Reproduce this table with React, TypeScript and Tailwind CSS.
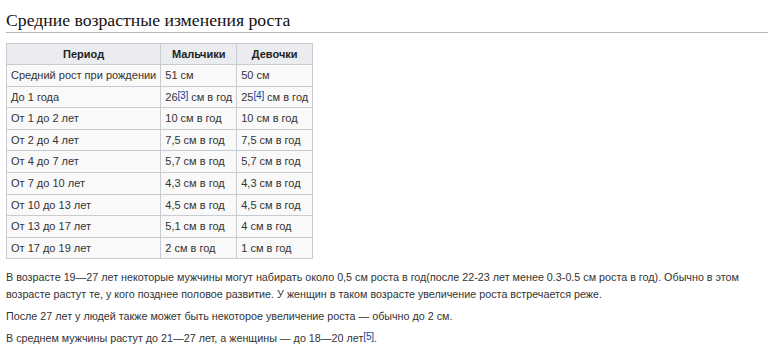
const rows: [string, React.ReactNode, React.ReactNode][] = [
  ["Средний рост при рождении", "51 см", "50 см"],
  [
    "До 1 года",
    <>
      26<Ref n={3} /> см в год
    </>,
    <>
      25<Ref n={4} /> см в год
    </>,
  ],
  ["От 1 до 2 лет", "10 см в год", "10 см в год"],
  ["От 2 до 4 лет", "7,5 см в год", "7,5 см в год"],
  ["От 4 до 7 лет", "5,7 см в год", "5,7 см в год"],
  ["От 7 до 10 лет", "4,3 см в год", "4,3 см в год"],
  ["От 10 до 13 лет", "4,5 см в год", "4,5 см в год"],
  ["От 13 до 17 лет", "5,1 см в год", "4 см в год"],
  ["От 17 до 19 лет", "2 см в год", "1 см в год"],
];

function Ref({ n }: { n: number }) {
  return (
    <sup className="relative -top-[2px] text-[10px] leading-none tracking-[-0.2px] text-[#0645ad]">
      [{n}]
    </sup>
  );
}

export default function App() {
  return (
    <div className="h-[348px] w-[768px] overflow-hidden bg-white pl-[6px] pt-[10px] font-['Liberation_Sans',Arial,sans-serif] text-[11px] text-[#333]">
      <h2 className="border-b border-[#b4b8bd] pb-[2px] font-['Liberation_Serif',Georgia,serif] text-[17.7px] leading-[20px] text-[#111]">
        Средние возрастные изменения роста
      </h2>

      <table className="mt-[10px] border-collapse border border-[#c8ccd1] bg-[#f9f9f9] text-[#333]">
        <thead>
          <tr className="bg-[#eaecf0]">
            <th className="h-[21px] w-[153px] border border-[#c8ccd1] px-[4px] text-center font-bold text-[#222]">
              Период
            </th>
            <th className="h-[21px] w-[75px] border border-[#c8ccd1] px-[4px] text-center font-bold text-[#222]">
              Мальчики
            </th>
            <th className="h-[21px] w-[75px] border border-[#c8ccd1] px-[4px] text-center font-bold text-[#222]">
              Девочки
            </th>
          </tr>
        </thead>
        <tbody>
          {rows.map(([period, boys, girls]) => (
            <tr key={period}>
              <td className="h-[21.6px] border border-[#c8ccd1] px-[4px] whitespace-nowrap">
                {period}
              </td>
              <td className="h-[21.6px] border border-[#c8ccd1] px-[4px] whitespace-nowrap">
                {boys}
              </td>
              <td className="h-[21.6px] border border-[#c8ccd1] px-[4px] whitespace-nowrap">
                {girls}
              </td>
            </tr>
          ))}
        </tbody>
      </table>

      <div className="mt-[10px] w-[760px] space-y-[5px] text-[10.75px] leading-[17px]">
        <p>
          В возрасте 19—27 лет некоторые мужчины могут набирать около 0,5 см
          роста в год(после 22-23 лет менее 0.3-0.5 см роста в год). Обычно в
          этом возрасте растут те, у кого позднее половое развитие. У женщин в
          таком возрасте увеличение роста встречается реже.
        </p>
        <p>После 27 лет у людей также может быть некоторое увеличение роста — обычно до 2 см.</p>
        <p>
          В среднем мужчины растут до 21—27 лет, а женщины — до 18—20 лет
          <Ref n={5} />.
        </p>
      </div>
    </div>
  );
}
